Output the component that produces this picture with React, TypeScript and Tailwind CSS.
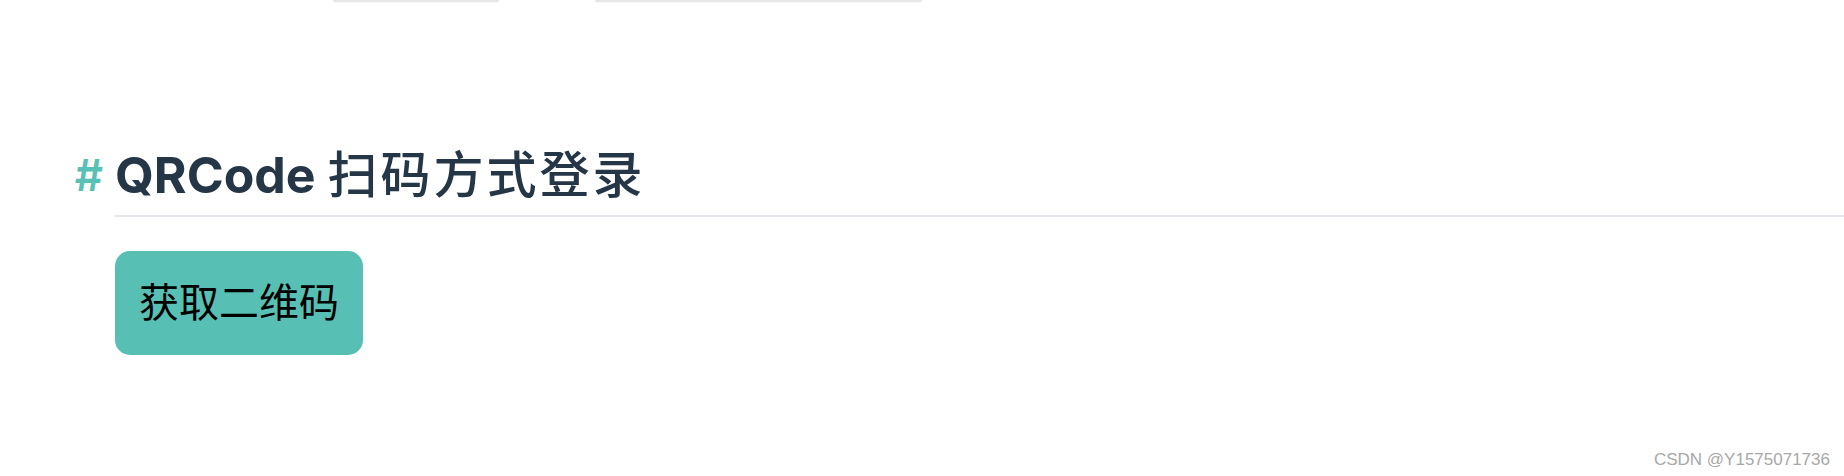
export default function App() {
  return (
    <div className="relative h-[476px] w-full overflow-hidden bg-white font-['Inter','Noto_Sans_CJK_SC',sans-serif]">
      {/* cut-off controls at the very top */}
      <div className="flex h-[3px] pl-[333px] gap-[96px]">
        <div className="h-[2px] w-[166px] rounded-b-[3px] bg-[#e6e6e6] shadow-[0_1px_1px_rgba(0,0,0,0.04)]" />
        <div className="h-[2px] w-[327px] rounded-b-[3px] bg-[#e6e6e6] shadow-[0_1px_1px_rgba(0,0,0,0.04)]" />
      </div>

      <div className="pl-[115px] pt-[140px]">
        <h2 className="relative border-b-2 border-[#e4e6eb] pb-[8px] text-[50px] font-bold leading-[64px] text-[#253646]">
          <span className="absolute right-full mr-[12px] top-0 font-semibold text-[44px] text-[#58c0b5]">#</span>
          QRCode <span className="font-medium tracking-[3px]">扫码方式登录</span>
        </h2>

        <button className="mt-[34px] flex h-[104px] w-[248px] items-center justify-center rounded-[15px] bg-[#58bfb4] text-[40px] font-normal text-black">
          获取二维码
        </button>
      </div>

      <div className="absolute bottom-[4px] right-[14px] font-['Liberation_Sans',Arial,sans-serif] text-[17px] text-[#a8a8a8] [text-shadow:0_0_1px_#fff]">
        CSDN @Y1575071736
      </div>
    </div>
  )
}
